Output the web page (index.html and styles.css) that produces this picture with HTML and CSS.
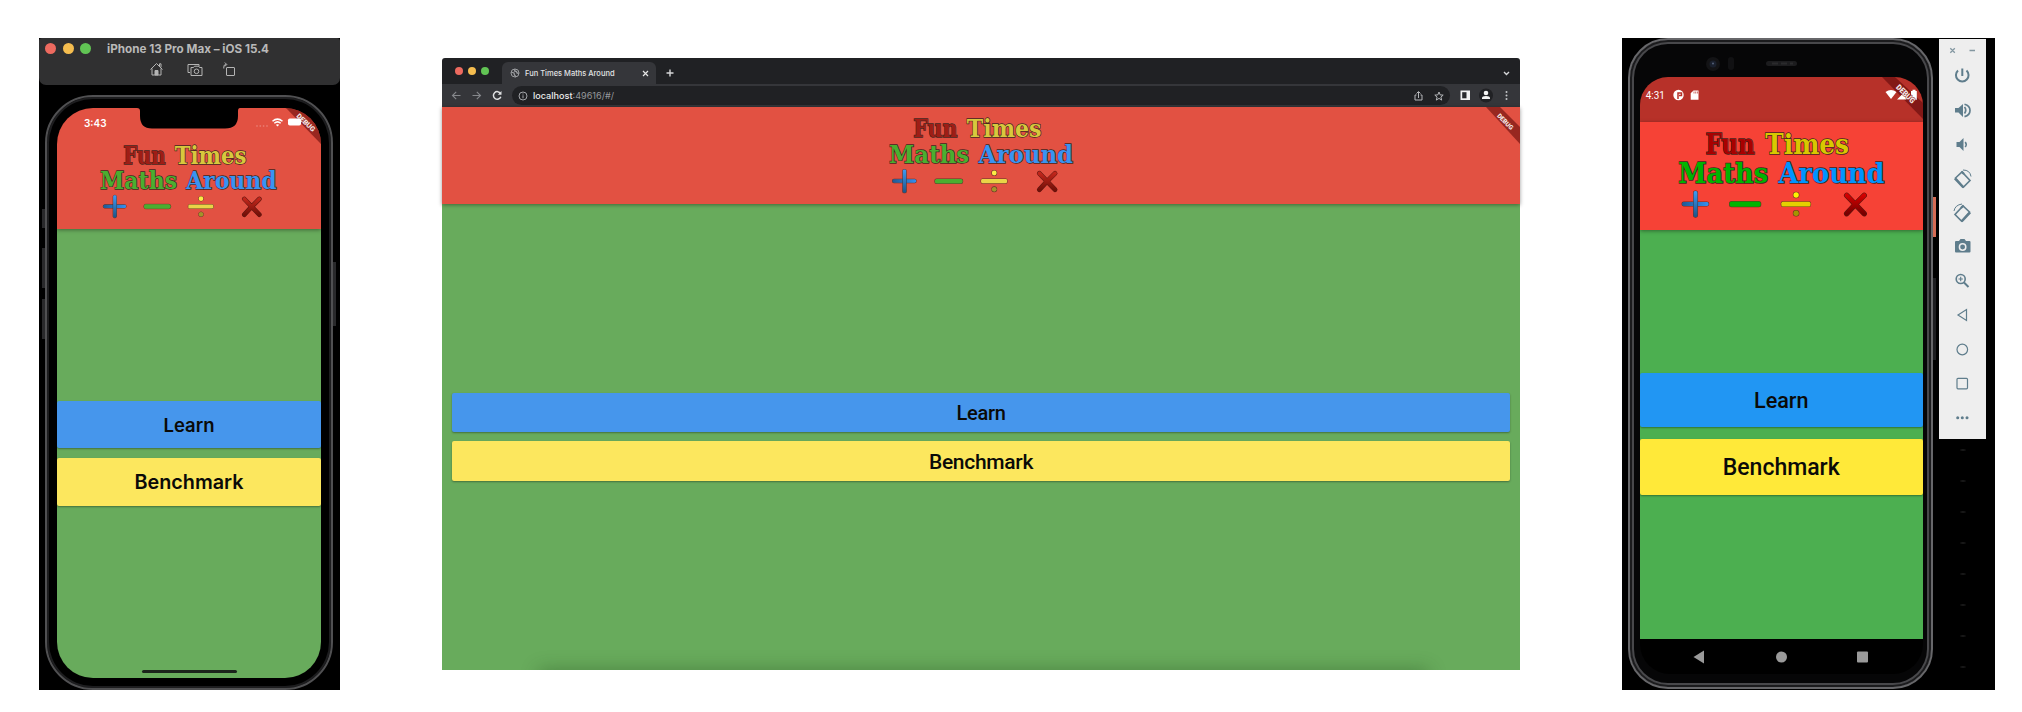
FILE: index.html
```html
<!DOCTYPE html>
<html lang="en">
<head>
<meta charset="utf-8">
<title>Fun Times Maths Around</title>
<link rel="stylesheet" href="styles.css">
</head>
<body>
<svg class="defs" width="0" height="0">
  <defs>
    <linearGradient id="blue" x1="0" y1="0" x2="0" y2="1"><stop offset="0" stop-color="#3d9af5"/><stop offset="1" stop-color="#1c5486"/></linearGradient>
    <linearGradient id="blueBar" x1="0" y1="0" x2="1" y2="0"><stop offset="0" stop-color="#205a94"/><stop offset="1" stop-color="#348ff0"/></linearGradient>
    <linearGradient id="red" x1="0" y1="0" x2="0" y2="1"><stop offset="0" stop-color="#c0261b"/><stop offset="1" stop-color="#741008"/></linearGradient>
    <linearGradient id="redVivid" x1="0" y1="0" x2="0" y2="1"><stop offset="0" stop-color="#d20000"/><stop offset="1" stop-color="#780000"/></linearGradient>
  </defs>
</svg>
<main class="stage">

  <section class="simulator">
    <header class="sim-bar">
      <div class="sim-title-row">
        <span class="lights"><i class="dot red"></i><i class="dot amber"></i><i class="dot lime"></i></span>
        <span class="sim-title">iPhone 13 Pro Max – iOS 15.4</span>
      </div>
      <svg class="sim-tools" width="301" height="20" viewBox="0 0 301 20" fill="none" stroke="#b4b4b4" stroke-width="1">
        <path d="M111.500 9.500 117.500 3.500 123.500 9.500M113 8.500v6.500h9V8.500M120.500 6V3.800h1.500v3.500"/><path d="M116 15v-4.500h3V15z" fill="#b4b4b4"/>
        <path d="M151 12.500h-2V4.500h11v2M152 7.500h2.500l1-1.300h4l1 1.300h2.500v8h-11z"/><circle cx="157.500" cy="11.300" r="2.300"/>
        <rect x="187.500" y="7.500" width="8" height="8" rx=".5"/><path d="M184.800 8.500V6.500q0-2 2.500-2M185.800 2.500l2 2-2 2"/>
      </svg>
    </header>
    <div class="iphone">
      <i class="key k1"></i><i class="key k2"></i><i class="key k3"></i><i class="key k4"></i>
      <div class="iphone-screen">
        <div class="app-head">
          <svg class="ios-status" width="264" height="38" viewBox="0 0 264 38">
            <path d="M80 0h103q-2 0-2 3v5q0 12.500-13 12.500H95Q83 20.500 83 8V3q0-3-3-3z" fill="#000"/>
            <text x="27" y="18.500" class="ios-time" textLength="22.500" lengthAdjust="spacingAndGlyphs">3:43</text>
            <g fill="#ee9187" opacity=".6"><circle cx="200" cy="18" r=".9"/><circle cx="203.300" cy="18" r=".9"/><circle cx="206.600" cy="18" r=".9"/><circle cx="210" cy="18" r=".9"/></g>
            <g fill="none" stroke="#fff" stroke-width="1.500"><path d="M215.500 13.300q5-4.400 10 0M217.300 15.300q3.200-2.800 6.400 0"/></g><path d="M218.800 16.800q1.700-1.300 3.400 0l-1.700 1.700z" fill="#fff"/>
            <path d="M229 0h15l20 20v16z" fill="#7c1714" opacity=".72"/>
            <rect x="231" y="10.500" width="13" height="7" rx="1.800" fill="#fff"/>
            <text x="249" y="17" class="debug" transform="rotate(43 249 14.500)" text-anchor="middle" font-size="7" textLength="23" lengthAdjust="spacingAndGlyphs">DEBUG</text>
          </svg>
          <svg class="logo" width="180" height="76.700" viewBox="210 340 540 230">
            <g class="words"><text x="283" y="402" textLength="127" lengthAdjust="spacingAndGlyphs" class="t-red">Fun</text><text x="437" y="402" textLength="215" lengthAdjust="spacingAndGlyphs" class="t-yellow">Times</text><text x="213" y="477" textLength="231" lengthAdjust="spacingAndGlyphs" class="t-green">Maths</text><text x="471" y="477" textLength="272" lengthAdjust="spacingAndGlyphs" class="t-blue">Around</text></g>
            <g class="ops"><rect x="223" y="525" width="68" height="10" rx="4" fill="url(#blueBar)"/><rect x="252.500" y="497" width="10" height="67" rx="4" fill="url(#blue)"/><rect x="345" y="524" width="80" height="13" rx="5" class="t-green"/><rect x="478" y="524.500" width="75" height="12" rx="4" class="t-gold"/><circle cx="516" cy="507" r="7" fill="#fcec45"/><circle cx="516" cy="554" r="7" fill="#a3932b"/><path d="M646 508l22 23 23 24M691 508l-23 23-22 24" class="times-edge"/><path d="M646 508l22 23 23 24M691 508l-23 23-22 24" class="times"/></g>
          </svg>
        </div>
        <div class="app-body">
          <div class="btn learn">Learn</div>
          <div class="btn bench">Benchmark</div>
          <i class="home-bar"></i>
        </div>
      </div>
    </div>
  </section>

  <section class="browser">
    <header class="tabs">
      <span class="lights"><i class="dot red"></i><i class="dot amber"></i><i class="dot lime"></i></span>
      <div class="tab">
        <svg width="10" height="10" viewBox="0 0 10 10"><circle cx="5" cy="5" r="4" fill="none" stroke="#9a9c9f"/><path d="M1 4l3 1 .5 2L6 9M5 1l-.5 2 2 .5L7 5l2 .5" fill="none" stroke="#9a9c9f" stroke-width="1.300"/></svg>
        <span class="tab-name">Fun Times Maths Around</span>
        <svg class="tab-x" width="7" height="7" viewBox="0 0 7 7"><path d="M1 1l5 5M6 1L1 6" stroke="#e6e6e6" stroke-width="1.200"/></svg>
      </div>
      <svg class="plus" width="8" height="8" viewBox="0 0 8 8"><path d="M4 .5v7M.5 4h7" stroke="#d5d6d8" stroke-width="1.400"/></svg>
      <svg class="chev" width="7" height="5" viewBox="0 0 7 5"><path d="M1 1l2.500 2.500L6 1" fill="none" stroke="#d5d6d8" stroke-width="1.400"/></svg>
    </header>
    <div class="toolbar">
      <svg class="nav" width="66" height="23" viewBox="0 0 66 23" fill="none"><path d="M18.500 11.500h-8m3.700-3.700-3.700 3.700 3.700 3.700M30.500 11.500h8m-3.700-3.700 3.700 3.700-3.700 3.700" stroke="#85878b" stroke-width="1.100"/><path d="M58.500 9.500a3.800 3.800 0 1 0 .3 3.200" stroke="#dedfe1" stroke-width="1.500"/><path d="M59.500 7v3.700h-3.700z" fill="#dedfe1"/></svg>
      <div class="address">
        <svg width="10" height="10" viewBox="0 0 10 10" fill="none" stroke="#a2a4a8"><circle cx="5" cy="5" r="4"/><path d="M5 4.300v3M5 2.500v1"/></svg>
        <span class="url"><b>localhost</b>:49616/#/</span>
        <svg class="addr-icons" width="32" height="12" viewBox="0 0 32 12" fill="none" stroke="#b4b6b9" stroke-width="1"><path d="M4.500 5H3v5h7V5H8.500M6.500 8V2M4.500 3.500l2-2 2 2"/><path d="M27 2l1.200 2.900 3 .2-2.300 2 .8 3L27 8.400l-2.700 1.700.8-3-2.300-2 3-.2z"/></svg>
      </div>
      <svg class="ext" width="70" height="23" viewBox="0 0 70 23"><path d="M10.500 6.500h9.500v9.500h-9.500z" fill="#f3f3f3"/><path d="M12.200 8.200h4.300v6.100h-4.300z" fill="#292a2d"/><circle cx="36" cy="11.500" r="7" fill="#202124"/><circle cx="36" cy="9" r="2.300" fill="#f3f3f3"/><path d="M32 15v-1q0-2 4-2t4 2v1z" fill="#f3f3f3"/><g fill="#c5c6c9"><circle cx="56.500" cy="8" r="1"/><circle cx="56.500" cy="11.500" r="1"/><circle cx="56.500" cy="15" r="1"/></g></svg>
    </div>
    <div class="app-head">
      <svg class="logo" width="187.500" height="79.900" viewBox="210 340 540 230">
        <g class="words"><text x="283" y="402" textLength="127" lengthAdjust="spacingAndGlyphs" class="t-red">Fun</text><text x="437" y="402" textLength="215" lengthAdjust="spacingAndGlyphs" class="t-yellow">Times</text><text x="213" y="477" textLength="231" lengthAdjust="spacingAndGlyphs" class="t-green">Maths</text><text x="471" y="477" textLength="272" lengthAdjust="spacingAndGlyphs" class="t-blue">Around</text></g>
        <g class="ops"><rect x="223" y="525" width="68" height="10" rx="4" fill="url(#blueBar)"/><rect x="252.500" y="497" width="10" height="67" rx="4" fill="url(#blue)"/><rect x="345" y="524" width="80" height="13" rx="5" class="t-green"/><rect x="478" y="524.500" width="75" height="12" rx="4" class="t-gold"/><circle cx="516" cy="507" r="7" fill="#fcec45"/><circle cx="516" cy="554" r="7" fill="#a3932b"/><path d="M646 508l22 23 23 24M691 508l-23 23-22 24" class="times-edge"/><path d="M646 508l22 23 23 24M691 508l-23 23-22 24" class="times"/></g>
      </svg>
      <svg class="ribbon" width="40" height="40" viewBox="0 0 40 40"><path d="M6 0h14l20 20v17z" fill="#7c1714" opacity=".72"/><text x="25.500" y="17" class="debug" transform="rotate(45 25.500 14.500)" text-anchor="middle" font-size="6.500" textLength="20" lengthAdjust="spacingAndGlyphs">DEBUG</text></svg>
    </div>
    <div class="app-body">
      <div class="btn learn">Learn</div>
      <div class="btn bench">Benchmark</div>
      <i class="dock-shade"></i>
    </div>
  </section>

  <section class="emulator">
    <div class="pixel">
      <i class="key p1"></i><i class="key p2"></i>
      <svg class="camera" width="295" height="37" viewBox="0 0 295 37"><circle cx="83" cy="24" r="7" fill="#131315"/><circle cx="83" cy="24" r="3.500" fill="#1a202d"/><circle cx="83" cy="23.500" r="1" fill="#55607a"/><rect x="98" y="17" width="6" height="13" rx="3" fill="#111113"/><rect x="136" y="21" width="31" height="5" rx="2.500" fill="#1c1c1e"/><path d="M142 23.500h6m3 0h6m3 0h3" stroke="#2b2b2d" stroke-width="2"/></svg>
      <div class="pixel-screen">
        <svg class="and-status" width="283" height="45" viewBox="0 0 283 45">
          <text x="5.800" y="22" class="and-time" textLength="19" lengthAdjust="spacingAndGlyphs">4:31</text>
          <circle cx="38.500" cy="18" r="5.200" fill="#fff"/><path d="M38 22v-6h3.500v2.500h-2.500" fill="none" stroke="#b73129" stroke-width="1.500"/>
          <path d="M53.500 13.500h5v9.300h-7.800v-6.600z" fill="#fff"/><path d="M54 14.500v2m1.700-2v2m1.700-2v2" stroke="#b73129" stroke-width=".7"/>
          <path d="M245.500 15q5.500-4 11 0L251 22z" fill="#fff"/>
          <path d="M242 0h13l28 26v16z" fill="#6b0e0e" opacity=".7"/>
          <path d="M266.500 13v9.500h-9.500z M271 14h1.500v-1.200h3V14h1.300v8.700H271z" fill="#fff"/>
          <text x="265.500" y="19.500" class="debug debug-outline" transform="rotate(45 265.500 17)" text-anchor="middle" font-size="8" textLength="23" lengthAdjust="spacingAndGlyphs">DEBUG</text>
        </svg>
        <div class="app-head">
          <svg class="logo vivid" width="210.200" height="89.500" viewBox="210 340 540 230">
            <g class="words"><text x="283" y="402" textLength="127" lengthAdjust="spacingAndGlyphs" class="t-red">Fun</text><text x="437" y="402" textLength="215" lengthAdjust="spacingAndGlyphs" class="t-yellow">Times</text><text x="213" y="477" textLength="231" lengthAdjust="spacingAndGlyphs" class="t-green">Maths</text><text x="471" y="477" textLength="272" lengthAdjust="spacingAndGlyphs" class="t-blue">Around</text></g>
            <g class="ops"><rect x="223" y="525" width="68" height="10" rx="4" fill="url(#blueBar)"/><rect x="252.500" y="497" width="10" height="67" rx="4" fill="url(#blue)"/><rect x="345" y="524" width="80" height="13" rx="5" class="t-green"/><rect x="478" y="524.500" width="75" height="12" rx="4" class="t-gold"/><circle cx="516" cy="507" r="7" fill="#fff200"/><circle cx="516" cy="554" r="7" fill="#a49500"/><path d="M646 508l22 23 23 24M691 508l-23 23-22 24" class="times-edge"/><path d="M646 508l22 23 23 24M691 508l-23 23-22 24" class="times"/></g>
          </svg>
        </div>
        <div class="app-body">
          <div class="btn learn">Learn</div>
          <div class="btn bench">Benchmark</div>
        </div>
        <svg class="and-nav" width="283" height="36" viewBox="0 0 283 36" fill="#9a9a9a"><path d="M64 11.500v13L53.500 18z"/><circle cx="141.500" cy="18" r="5.500"/><rect x="217" y="12.500" width="11" height="11" rx="1"/></svg>
      </div>
    </div>
    <aside class="emu-side">
      <svg class="emu-tools" width="47" height="400" viewBox="0 0 47 400" fill="none" stroke="#5f7d8c" stroke-width="1.600">
        <path d="M11.300 9.300l4.500 4.500m0-4.500l-4.500 4.500M30.500 11.500h5.500" stroke="#8397a1" stroke-width="1.300"/>
        <path d="M19 31.500a6.300 6.300 0 1 0 8.500 0M23.300 29.500v7.500" stroke-width="2"/>
        <path d="M16 69h3.500l4.500-4v13l-4.500-4.500H16z" fill="#5f7d8c" stroke="none"/><path d="M25.500 68q2.500 3 0 6.500M25.500 65.200q5.500 1.500 5.500 6.200t-5.500 6.200" stroke-width="1.700"/>
        <path d="M17.500 103h3l4-4v13l-4-4h-3z" fill="#5f7d8c" stroke="none"/><path d="M26.200 103q2 2.500 0 5"/>
        <g><path d="M16.500 139l6.500-6 8 8.500-6.500 6.500z"/><path d="M15.800 139.500l8.500 9M22.500 132.500l2.500 2.500" stroke-width="2.200"/><path d="M24 131q7 0 8 6.500" stroke-width="1"/></g>
        <g><path d="M30.500 173l-6.500-6-8 8.500 6.500 6.500z"/><path d="M31.200 173.500l-8.500 9M24.500 166.500l-2.500 2.500" stroke-width="2.200"/><path d="M23 165q-7 1-8 7" stroke-width="1"/></g>
        <path d="M17 202h3l1.500-2h4l1.500 2h3.500q1 0 1 1v9.500q0 1-1 1H17q-1 0-1-1V203q0-1 1-1z" fill="#5f7d8c" stroke="none"/><circle cx="23.600" cy="208" r="3.200" stroke="#eee" stroke-width="1.500"/>
        <circle cx="21.700" cy="240" r="4.500"/><path d="M25 243.500l4.500 4.500" stroke-width="2"/><path d="M19.500 240h4.400M21.700 237.800v4.400" stroke-width="1.100"/>
        <path d="M27.500 270.500v11L19 276z" stroke-width="1.200"/><circle cx="23.300" cy="310.500" r="5.300" stroke-width="1.200"/><rect x="18" y="339.300" width="10.500" height="10.500" rx="1" stroke-width="1.200"/>
        <g fill="#5f7d8c" stroke="none"><circle cx="18.700" cy="378.700" r="1.500"/><circle cx="23.300" cy="378.700" r="1.500"/><circle cx="28" cy="378.700" r="1.500"/></g>
      </svg>
      <div class="terminal"></div>
    </aside>
  </section>
</main>
</body>
</html>
```

FILE: styles.css
```css
* { box-sizing: border-box; }
body { margin: 0; width: 2022px; height: 712px; background: #fff; overflow: hidden; }
svg { display: block; flex: none; }
.defs { position: absolute; }
.stage { display: flex; align-items: flex-start; padding: 38px 0 0 39px; }

/* shared pieces */
.lights { display: flex; }
.dot { border-radius: 50%; }
.red { background: #ed6a5f; }
.amber { background: #f5bd4f; }
.lime { background: #61c454; }
.app-head { position: relative; z-index: 1; background: #e25142; box-shadow: 0 1px 4px rgba(0, 0, 0, .4); }
.app-body { display: flex; flex-direction: column; position: relative; background: #68ab5c; }
.btn { display: flex; align-items: center; justify-content: center; color: #0a0a08; font: 500 20px Roboto, sans-serif; border-radius: 2px; box-shadow: 0 1px 2px rgba(0, 0, 0, .35); }
.learn { background: #4696ec; }
.bench { background: #fce75e; }
.debug { font-family: Roboto, sans-serif; font-weight: 900; fill: #fff; fill-opacity: .9; }
.debug-outline { stroke: #8a1a17; stroke-width: 1px; paint-order: stroke; }
.logo { overflow: visible; }
.words { font: bold 71px "DejaVu Serif", serif; stroke: #30201a; stroke-width: 4px; stroke-opacity: .9; paint-order: stroke; }
.ops { stroke: #3a2a20; stroke-width: 3px; stroke-opacity: .75; paint-order: stroke; }
.times-edge { fill: none; stroke: #5a150f; stroke-opacity: 1; stroke-width: 14px; stroke-linecap: round; }
.times { fill: none; stroke: url(#red); stroke-opacity: 1; stroke-width: 11px; stroke-linecap: round; }
.vivid .times { stroke: url(#redVivid); }
.t-red { fill: #9f1d15; }
.t-yellow { fill: #d7c83d; }
.t-gold { fill: #e9d447; }
.t-green { fill: #4bae30; }
.t-blue { fill: #3993f2; }
.vivid .t-red { fill: #a90000; }
.vivid .t-yellow { fill: #d8c800; }
.vivid .t-gold { fill: #e4d100; }
.vivid .t-green { fill: #00b400; }
.vivid .t-blue { fill: #0094ff; }

/* iPhone simulator */
.simulator { width: 301px; height: 652px; background: #000; }
.sim-bar { height: 47px; background: #303031; border-radius: 3px 3px 7px 7px; }
.sim-title-row { display: flex; align-items: center; height: 21px; padding-left: 6px; }
.simulator .lights { gap: 6.500px; }
.simulator .dot { width: 11px; height: 11px; }
.sim-title { margin-left: 16px; color: #b9b9b9; font: 700 11.700px Inter, sans-serif; white-space: nowrap; }
.sim-tools { margin-top: 1px; }
.iphone { position: relative; width: 288px; height: 595px; margin: 10px 0 0 6px; padding: 11px 10px 10px 10px; border: 2px solid #505052; border-radius: 48px; box-shadow: inset 0 0 0 2px #1d1d1f; }
.key { position: absolute; width: 3px; background: #29292b; }
.k1 { left: -5px; top: 112px; height: 19px; }
.k2 { left: -5px; top: 151px; height: 40px; }
.k3 { left: -5px; top: 202px; height: 40px; }
.k4 { right: -5px; top: 165px; height: 64px; }
.iphone-screen { height: 569.500px; border-radius: 36px; overflow: hidden; }
.iphone .app-head { height: 121px; }
.iphone .logo { margin: -3.200px 0 0 42px; }
.ios-time { font: 600 10.500px Inter, sans-serif; fill: #fff; }
.iphone .app-body { height: 449px; padding-top: 172px; gap: 10px; }
.iphone .btn { font-family: Inter, sans-serif; font-weight: 600; padding-top: 1px; }
.iphone .learn { height: 46.500px; font-size: 18.500px; }
.iphone .bench { height: 48px; font-size: 19.800px; }
.home-bar { width: 95px; height: 3px; margin: 154px auto 0; border-radius: 2px; background: #1b241b; }

/* desktop browser */
.browser { width: 1078px; height: 612px; margin: 20px 0 0 102px; background: #202124; border-radius: 3px 3px 0 0; }
.tabs { display: flex; align-items: center; height: 26px; }
.browser .lights { gap: 5px; margin: 0 13px 0 13px; }
.browser .dot { width: 8px; height: 8px; }
.tab { display: flex; align-items: center; width: 154px; height: 22px; margin-top: 4px; padding: 0 7px 0 8px; border-radius: 6px 6px 0 0; background: #35363a; }
.tab-name { margin-left: 5px; color: #e1e2e4; font: 500 7.500px Inter, sans-serif; white-space: nowrap; }
.tab-x { margin-left: auto; }
.plus { margin: 4px 0 0 10px; }
.chev { margin: 4px 10px 0 auto; }
.toolbar { display: flex; align-items: center; height: 23px; background: #35363a; }
.address { display: flex; align-items: center; flex: 1; height: 19px; margin-left: 3.500px; padding: 0 6px 0 6.500px; border-radius: 10px; background: #202124; }
.url { margin-left: 5px; color: #96989b; font: 400 9.100px Inter, sans-serif; }
.url b { color: #eceded; font-weight: 500; }
.addr-icons { margin-left: auto; }
.browser .app-head { height: 97px; }
.browser .logo { margin-left: 446.300px; position: relative; top: 7.500px; }
.ribbon { position: absolute; top: 0; right: 0; }
.browser .app-body { height: 466px; padding: 189px 10px 0; gap: 9.500px; overflow: hidden; }
.browser .btn { letter-spacing: -.3px; padding: 1px 0 0; }
.browser .learn { height: 38.500px; font-size: 20px; }
.browser .bench { height: 40px; font-size: 21px; }
.dock-shade { position: absolute; left: 100px; right: 95px; bottom: -13px; height: 10px; box-shadow: 0 0 18px 3px rgba(30, 70, 25, .4); }

/* Android emulator */
.emulator { display: flex; width: 373px; height: 652px; margin-left: 102px; padding-left: 6px; background: #000; }
.pixel { position: relative; width: 305px; height: 651px; border: 2px solid #67676a; border-radius: 40px; box-shadow: inset 0 0 0 2px #1b1b1d, inset 0 0 0 4px #48484b; background: #060607; padding: 0 9px 0 10px; }
.camera { margin-left: -10px; }
.p1 { right: -5px; top: 157px; height: 40px; background: #d66c55; }
.p2 { right: -5px; top: 238px; height: 82px; background: #1d1d20; }
.pixel-screen { width: 282.500px; height: 597px; border-radius: 28px 28px 30px 30px; overflow: hidden; background: #000; }
.and-status { background: #b73129; }
.and-time { font: 400 10.500px Roboto, sans-serif; fill: #fff; }
.pixel .app-head { height: 107.500px; padding: 8px 0 0 36.800px; background: #f64236; }
.pixel .app-body { height: 409px; padding-top: 143.500px; gap: 11.500px; background: #4caf50; }
.pixel .btn { padding-top: 1px; }
.pixel .learn { height: 54px; font-size: 21.600px; background: #2196f3; }
.pixel .bench { height: 56px; font-size: 23px; background: #ffe939; }
.emu-side { width: 62px; padding: 1px 0 0 6px; }
.emu-tools { background: #eee; }
.terminal { width: 56px; height: 245px; background: radial-gradient(ellipse 4px 1px at 24px 11px, #303030, transparent) 0 0 / 56px 31px repeat-y; }
```
